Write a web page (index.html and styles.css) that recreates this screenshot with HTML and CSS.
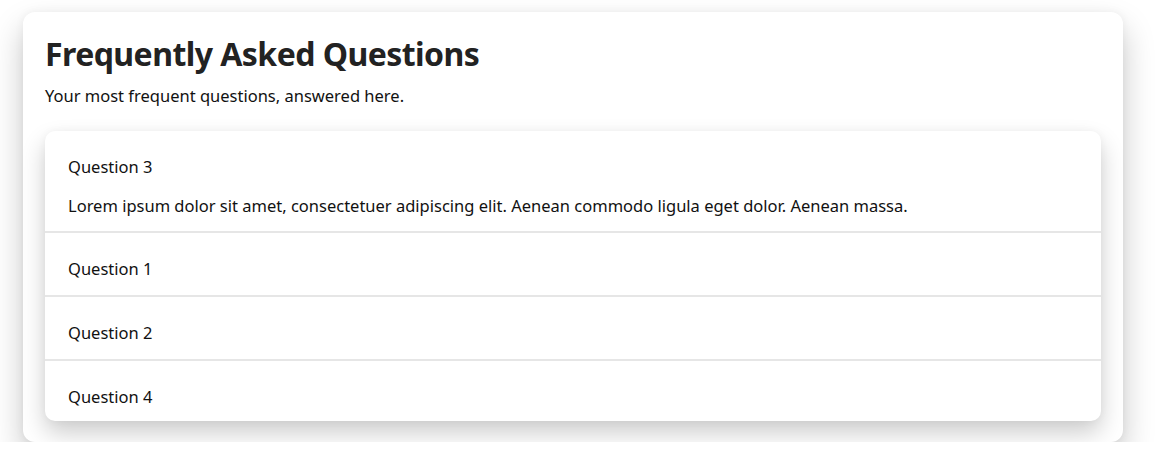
FILE: index.html
```html
<!DOCTYPE html>
<html>
<head>
<meta charset="utf-8">
<link rel="stylesheet" href="styles.css">
</head>
<body>
<div class="page">
  <section class="faq">
    <h1 class="faq-title">Frequently Asked Questions</h1>
    <p class="faq-sub">Your most frequent questions, answered here.</p>
    <div class="accordion">
      <div class="item open">
        <div class="q">Question 3</div>
        <div class="a">Lorem ipsum dolor sit amet, consectetuer adipiscing elit. Aenean commodo ligula eget dolor. Aenean massa.</div>
      </div>
      <div class="item"><div class="q">Question 1</div></div>
      <div class="item"><div class="q">Question 2</div></div>
      <div class="item"><div class="q">Question 4</div></div>
    </div>
  </section>
</div>
</body>
</html>
```
FILE: styles.css
```css
html, body {
  margin: 0;
  padding: 0;
  background: #ffffff;
}
body {
  font-family: "Noto Sans", "Open Sans", sans-serif;
  color: #1a1a1a;
}
.page {
  padding: 12px 40px 0 23px;
}
.faq {
  width: 1100px;
  box-sizing: border-box;
  background: #fff;
  border-radius: 12px;
  padding: 22px 22px 21px;
  box-shadow: 0 16px 32px rgba(0,0,0,0.22), 0 0 10px rgba(0,0,0,0.05);
}
.faq-title {
  margin: 0;
  font-size: 32px;
  line-height: 40px;
  font-weight: 700;
  letter-spacing: -0.55px;
  color: #222;
}
.faq-sub {
  margin: 10px 0 0;
  font-size: 16.5px;
  line-height: 24px;
  color: #111;
}
.accordion {
  margin-top: 23px;
  background: #fff;
  border-radius: 10px;
  box-shadow: 0 12px 24px rgba(0,0,0,0.2), 0 0 8px rgba(0,0,0,0.04);
  overflow: hidden;
}
.item {
  border-top: 2px solid #e6e6e6;
}
.item:first-child {
  border-top: none;
}
.q, .a {
  padding: 0 23px;
  font-size: 16.5px;
  line-height: 24px;
  color: #111;
}
.q {
  padding-top: 24px;
  padding-bottom: 14px;
}
.item:last-child .q {
  padding-bottom: 12px;
}
.open .q {
  padding-bottom: 13px;
}
.open .a {
  padding-top: 2px;
  padding-bottom: 13px;
}
```
